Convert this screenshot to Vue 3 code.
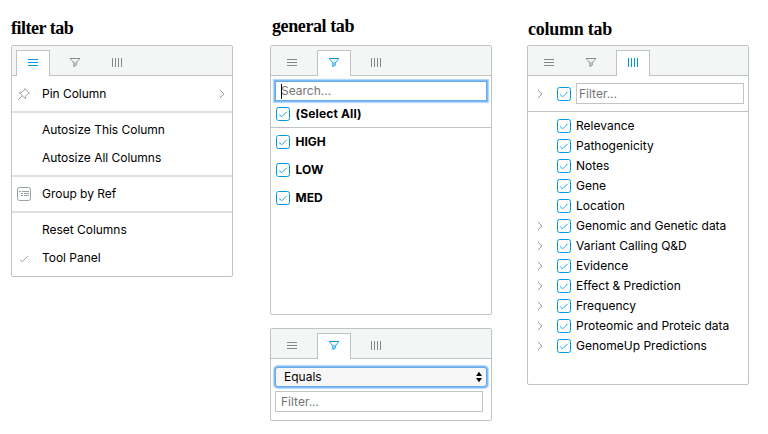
<script setup>
import { h } from 'vue'

const tabs = ['menu', 'filter', 'columns']

const TabBar = (props) =>
  h('div', { class: 'tabs' }, tabs.map((name) =>
    h('div', { class: ['tab', { active: name === props.active }] }, [
      h('svg', { viewBox: '0 0 12 12', width: 12, height: 12 }, tabShapes[name]())
    ])
  ))
TabBar.props = ['active']

const tabShapes = {
  menu: () => h('path', { d: 'M1 2.5H11M1 5.5H11M1 8.5H11' }),
  filter: () => [
    h('path', { d: 'M1 1.5H11' }),
    h('path', { class: 'thin', d: 'M1.4 1.8L4.8 6V9.6L7.3 8.2V6L10.6 1.8' }),
    h('path', { class: 'shade', d: 'M3.4 4.6H8.6L7.5 6V8.3L4.7 9.8V6Z' })
  ],
  columns: () => h('path', { d: 'M1.5 1V10M4.5 1V10M7.5 1V10M10.5 1V10' })
}

const CheckBox = () =>
  h('svg', { class: 'check', viewBox: '0 0 14 14', width: 14, height: 14 }, [
    h('rect', { x: 0.5, y: 0.5, width: 13, height: 13, rx: 2 }),
    h('path', { d: 'M3.2 7.5L5.7 9.8L10.8 4.7' })
  ])

const Chevron = () =>
  h('svg', { class: 'chevron', viewBox: '0 0 6 10', width: 6, height: 10 }, [
    h('path', { d: 'M1 1L4.8 5L1 9' })
  ])

const menu = [
  [{ label: 'Pin Column', icon: 'pin', sub: true }],
  [{ label: 'Autosize This Column' }, { label: 'Autosize All Columns' }],
  [{ label: 'Group by Ref', icon: 'group' }],
  [{ label: 'Reset Columns' }, { label: 'Tool Panel', icon: 'tick' }]
]
const values = ['HIGH', 'LOW', 'MED']
const columns = [
  { label: 'Relevance' },
  { label: 'Pathogenicity' },
  { label: 'Notes' },
  { label: 'Gene' },
  { label: 'Location' },
  { label: 'Genomic and Genetic data', group: true },
  { label: 'Variant Calling Q&D', group: true },
  { label: 'Evidence', group: true },
  { label: 'Effect & Prediction', group: true },
  { label: 'Frequency', group: true },
  { label: 'Proteomic and Proteic data', group: true },
  { label: 'GenomeUp Predictions', group: true }
]
</script>

<template>
  <main class="page">
    <section class="col">
      <h2 class="t-filter">filter tab</h2>
      <div class="panel menu-panel">
        <TabBar active="menu" />
        <div class="menu">
          <div v-for="(group, i) in menu" :key="i" class="menu-group">
            <div v-for="item in group" :key="item.label" class="menu-item">
              <span class="slot">
                <svg v-if="item.icon === 'pin'" viewBox="0 0 14 14" width="14" height="14">
                  <path d="M1.3 12.7L5 9M7.8 1.5L12.5 6.2L11.2 6.6L8.8 9L8.4 11.6L2.4 5.6L5 5.2L7.4 2.8Z" />
                </svg>
                <svg v-else-if="item.icon === 'group'" viewBox="0 0 14 14" width="14" height="14">
                  <rect x=".5" y=".5" width="13" height="13" rx="2" />
                  <path d="M2 4.5H4M5 4.5H12M4 6.5H6M7 6.5H12M4 8.5H6M7 8.5H12" />
                </svg>
                <svg v-else-if="item.icon === 'tick'" viewBox="0 0 14 14" width="14" height="14">
                  <path d="M3 8.6L5.3 10.6L11 5" />
                </svg>
              </span>
              <span class="menu-label">{{ item.label }}</span>
              <Chevron v-if="item.sub" />
            </div>
          </div>
        </div>
      </div>
    </section>

    <section class="col">
      <h2 class="t-general">general tab</h2>
      <div class="panel values-panel">
        <TabBar active="filter" />
        <div class="search"><i class="caret"></i>Search...</div>
        <div class="value all"><CheckBox /><span>(Select All)</span></div>
        <div class="values">
          <div v-for="v in values" :key="v" class="value"><CheckBox /><span>{{ v }}</span></div>
        </div>
      </div>
      <div class="panel equals-panel">
        <TabBar active="filter" />
        <div class="select">
          <span>Equals</span>
          <svg viewBox="0 0 6 12" width="6" height="12"><path d="M0 5L3 0.8L6 5ZM0 7L3 11.2L6 7Z" /></svg>
        </div>
        <div class="field equals-field">Filter...</div>
      </div>
    </section>

    <section class="col">
      <h2 class="t-column">column tab</h2>
      <div class="panel columns-panel">
        <TabBar active="columns" />
        <div class="columns-head">
          <span class="expand"><Chevron /></span>
          <CheckBox />
          <div class="field">Filter...</div>
        </div>
        <div class="columns">
          <div v-for="c in columns" :key="c.label" class="column">
            <span class="expand"><Chevron v-if="c.group" /></span>
            <CheckBox />
            <span class="column-label">{{ c.label }}</span>
          </div>
        </div>
      </div>
    </section>
  </main>
</template>

<style>
body {
  background: #fff;
}
</style>

<style scoped>
.page {
  box-sizing: border-box;
  width: 768px;
  height: 434px;
  padding-left: 11px;
  display: grid;
  grid-template-columns: 222px 222px 222px;
  column-gap: 37px;
  align-items: start;
  overflow: hidden;
  font: 12px/20px Inter, "Liberation Sans", sans-serif;
  color: #000;
}
.col:nth-child(3) {
  margin-left: -2px;
  width: 222px;
}
h2 {
  box-sizing: border-box;
  height: 45px;
  margin: 0;
  font: bold 18px/20px "Liberation Serif", serif;
  white-space: nowrap;
}
.t-filter { padding-top: 18px; letter-spacing: -0.5px; }
.t-general { padding: 16px 0 0 2px; letter-spacing: -0.4px; }
.t-column { padding: 19px 0 0 1px; letter-spacing: -0.25px; }

.panel {
  box-sizing: border-box;
  width: 222px;
  border: 1px solid #bdc3c7;
  border-radius: 2px;
  background: #fff;
}
.menu-panel { height: 232px; }
.values-panel { height: 270px; }
.equals-panel { height: 93px; margin-top: 13px; }
.columns-panel { height: 340px; }

:deep(.tabs) {
  box-sizing: border-box;
  height: 30px;
  padding: 4px 4px 0;
  display: flex;
  gap: 8px;
  background: #f4f6f6;
  border-bottom: 1px solid #bdc3c7;
}
:deep(.tab) {
  box-sizing: border-box;
  width: 34px;
  height: 26px;
  padding-top: 6px;
  border: 1px solid transparent;
  border-bottom: 0;
  display: flex;
  justify-content: center;
  align-items: flex-start;
}
:deep(.tab.active) {
  background: #fff;
  border-color: #bdc3c7;
}
:deep(.tab svg) { fill: none; stroke: #7f8c8d; }
:deep(.tab.active svg) { stroke: #0099e6; }
:deep(.tab .thin) { stroke-width: 0.8; }
:deep(.tab .shade) { fill: #7f8c8d; stroke: none; opacity: 0.35; }
:deep(.tab.active .shade) { fill: #0099e6; }

.check { flex: none; fill: none; stroke: #0099e6; }
.check :deep(path) { stroke-width: 0.9; }
.chevron { flex: none; fill: none; stroke: #7f8c8d; stroke-width: 0.9; }

.menu { padding: 4px 0; }
.menu-group + .menu-group {
  margin-top: 3px;
  padding-top: 3px;
  border-top: 2px solid #dde1e4;
}
.menu-item {
  height: 28px;
  padding: 0 7px 0 5px;
  display: flex;
  align-items: center;
}
.slot {
  width: 25px;
  height: 14px;
  flex: none;
}
.slot svg { display: block; fill: none; stroke: #7f8c8d; stroke-width: 0.8; }
.menu-label { flex: 1; letter-spacing: -0.03px; }

.search,
.select {
  box-sizing: border-box;
  width: 212px;
  height: 20px;
  margin: 5px 0 0 4px;
  border: 1px solid #68a9e6;
  box-shadow: 0 0 0 1px #7fbcf5, 0 0 1px 2px #b5d9fa;
  display: flex;
  align-items: center;
}
.search { padding-left: 5px; color: #757575; }
.caret { width: 1px; height: 15px; background: #000; margin-right: -1px; }
.select {
  margin-top: 8px;
  padding: 0 4px 0 8px;
  justify-content: space-between;
  background: #f7f7f7;
  border-radius: 3px;
}
.field {
  box-sizing: border-box;
  height: 21px;
  border: 1px solid #c3c4c5;
  color: #757575;
  line-height: 19px;
}
.equals-field { width: 208px; margin: 4px 0 0 4px; padding-left: 5px; }

.value {
  height: 28px;
  padding-left: 5px;
  display: flex;
  align-items: center;
  gap: 5.5px;
  font-weight: 700;
}
.value.all { height: 26px; border-bottom: 1px solid #bdc3c7; letter-spacing: 0.15px; }

.expand { width: 29px; height: 10px; padding-left: 9px; box-sizing: border-box; display: flex; }
.columns-head {
  height: 35px;
  display: flex;
  align-items: center;
  border-bottom: 1px solid #bdc3c7;
}
.columns-head .field { width: 168px; margin-left: 5px; padding-left: 2px; }
.columns { padding-top: 4px; }
.column { height: 20px; display: flex; align-items: center; }
.column-label { margin-left: 5px; }
</style>
